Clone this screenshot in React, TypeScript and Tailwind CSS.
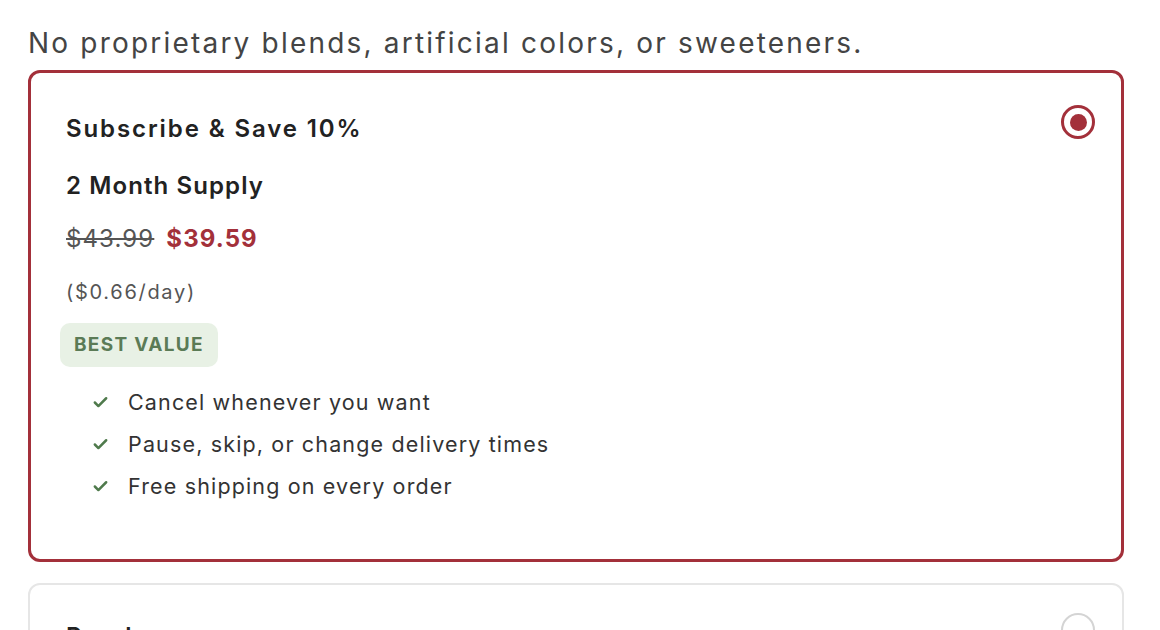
import { Check } from "lucide-react";

const perks = [
  "Cancel whenever you want",
  "Pause, skip, or change delivery times",
  "Free shipping on every order",
];

function Radio({ checked }: { checked?: boolean }) {
  return checked ? (
    <span className="flex h-[34px] w-[34px] shrink-0 items-center justify-center rounded-full border-[3.5px] border-[#a3303a]">
      <span className="h-[17px] w-[17px] rounded-full bg-[#a3303a]" />
    </span>
  ) : (
    <span className="h-[34px] w-[34px] shrink-0 rounded-full border-2 border-[#d4d4d4]" />
  );
}

export default function App() {
  return (
    <div
      className="h-[630px] w-[1160px] overflow-hidden bg-white pl-[28px] pt-[25px]"
      style={{ fontFamily: "Inter, 'Noto Sans', sans-serif" }}
    >
      <p className="text-[28px] leading-[36px] tracking-[2.2px] text-[#444444]">
        No proprietary blends, artificial colors, or sweeteners.
      </p>

      <div className="mt-[9px] flex w-[1096px] flex-col gap-[21px]">
        {/* Selected plan */}
        <div className="rounded-[12px] border-[3px] border-[#a3303a] bg-white pb-[52px] pl-[35px] pr-[26px] pt-[32px]">
          <div className="flex items-start justify-between">
            <h3 className="mt-[8px] text-[24px] font-semibold leading-[32px] tracking-[1.9px] text-[#222222]">
              Subscribe &amp; Save 10%
            </h3>
            <Radio checked />
          </div>
          <p className="mt-[25px] text-[24px] font-semibold leading-[32px] tracking-[1.1px] text-[#222222]">
            2 Month Supply
          </p>
          <div className="mt-[21px] flex items-baseline gap-[12px] text-[24px] leading-[32px] tracking-[1.1px]">
            <span className="text-[#555555] line-through">$43.99</span>
            <span className="font-bold text-[#a3303a]">$39.59</span>
          </div>
          <p className="mt-[23px] text-[20px] leading-[28px] tracking-[1.7px] text-[#555555]">
            ($0.66/day)
          </p>
          <span className="-ml-[6px] mt-[17px] inline-block rounded-[10px] bg-[#e8f1e5] px-[14px] py-[10px] text-[19px] font-bold uppercase leading-[24px] tracking-[1.3px] text-[#5b7b56]">
            Best Value
          </span>
          <ul className="mt-[14px] pl-[26px]">
            {perks.map((perk) => (
              <li
                key={perk}
                className="flex items-center gap-[19px] text-[21.5px] leading-[42px] tracking-[1.15px] text-[#333333]"
              >
                <Check className="h-[17px] w-[17px] text-[#4f7a4c]" strokeWidth={3.5} />
                {perk}
              </li>
            ))}
          </ul>
        </div>

        {/* One-off option */}
        <div className="rounded-[12px] border-2 border-[#e6e6e6] bg-white pl-[36px] pr-[27px] pt-[28px]">
          <div className="flex items-start justify-between">
            <h3 className="mt-[8px] text-[24px] font-semibold leading-[32px] tracking-[1.5px] text-[#222222]">
              Purchase once
            </h3>
            <Radio />
          </div>
        </div>
      </div>
    </div>
  );
}
